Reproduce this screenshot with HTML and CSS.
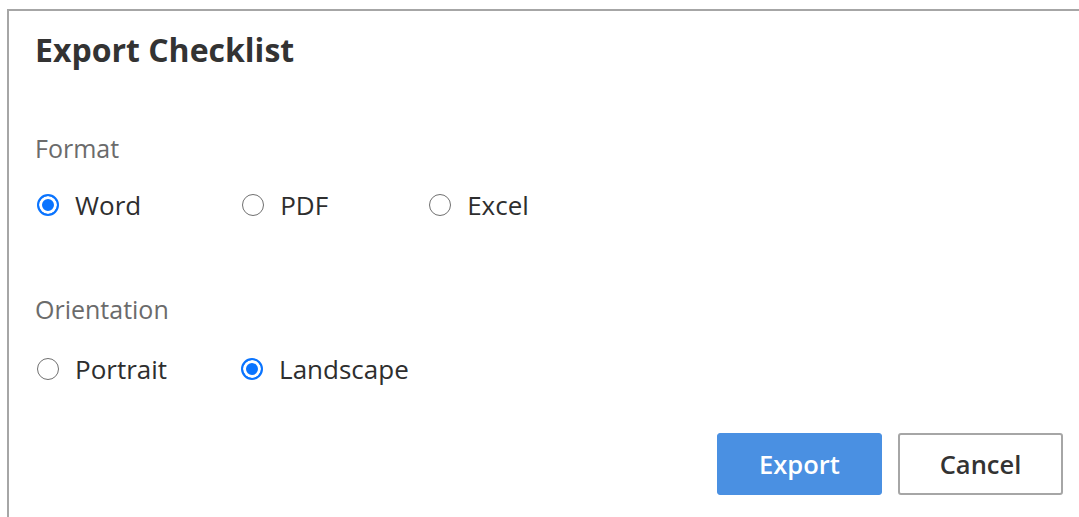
FILE: index.html
```html
<!DOCTYPE html>
<html lang="en">
<head>
<meta charset="utf-8">
<title>Export Checklist</title>
<link rel="stylesheet" href="styles.css">
</head>
<body>
<div class="dialog">
  <h1 class="dialog-title">Export Checklist</h1>

  <section class="field field-format">
    <div class="field-label">Format</div>
    <div class="options options-format">
      <label class="option"><span class="radio checked"></span><span class="option-text">Word</span></label>
      <label class="option"><span class="radio"></span><span class="option-text">PDF</span></label>
      <label class="option"><span class="radio"></span><span class="option-text">Excel</span></label>
    </div>
  </section>

  <section class="field field-orientation">
    <div class="field-label">Orientation</div>
    <div class="options options-orientation">
      <label class="option"><span class="radio"></span><span class="option-text">Portrait</span></label>
      <label class="option"><span class="radio checked"></span><span class="option-text">Landscape</span></label>
    </div>
  </section>

  <div class="actions">
    <button class="btn btn-primary">Export</button>
    <button class="btn btn-secondary">Cancel</button>
  </div>
</div>
</body>
</html>
```

FILE: styles.css
```css
html, body {
  margin: 0;
  padding: 0;
  background: #ffffff;
}

body {
  font-family: "Open Sans", "Noto Sans", sans-serif;
  color: #333333;
  overflow: hidden;
}

/* dialog frame: only the top and left edges fall inside the window */
.dialog {
  margin: 9px 0 0 7px;
  height: 600px;
  border-top: 2px solid #a6a6a6;
  border-left: 2px solid #a6a6a6;
  padding: 0 16px 0 26px;
}

.dialog-title {
  margin: 0;
  padding-top: 19px;
  font-size: 32px;
  line-height: 40px;
  font-weight: 700;
  color: #333333;
}

.field-format {
  margin-top: 63px;
}

.field-orientation {
  margin-top: 72px;
}

.field-label {
  font-size: 25px;
  line-height: 30px;
  color: #6b6b6b;
}

.options {
  display: flex;
  align-items: center;
  height: 34px;
}

.options-format {
  margin-top: 25px;
}

.options-orientation {
  margin-top: 28px;
}

.option {
  display: flex;
  align-items: center;
  gap: 16px;
  font-size: 26px;
  line-height: 34px;
  color: #2e2e2e;
}

.options-format .option {
  margin-right: 99px;
}

.options-orientation .option {
  margin-right: 72px;
}

.radio {
  box-sizing: border-box;
  width: 22px;
  height: 22px;
  border-radius: 50%;
  border: 1.5px solid #707070;
  margin-left: 2px;
  background: #ffffff;
}

.radio.checked {
  border: 2px solid #0a74ff;
  box-shadow: inset 0 0 0 3px #ffffff;
  background: #0a74ff;
}

.actions {
  display: flex;
  justify-content: flex-end;
  gap: 16px;
  margin-top: 47px;
}

.btn {
  box-sizing: border-box;
  width: 165px;
  height: 62px;
  border-radius: 3px;
  font-family: "Open Sans", "Noto Sans", sans-serif;
  font-size: 25.5px;
  font-weight: 600;
}

.btn-primary {
  background: #4a90e2;
  border: 1px solid #4a90e2;
  color: #ffffff;
}

.btn-secondary {
  background: #ffffff;
  border: 2px solid #a6a6a6;
  color: #333333;
}
```
